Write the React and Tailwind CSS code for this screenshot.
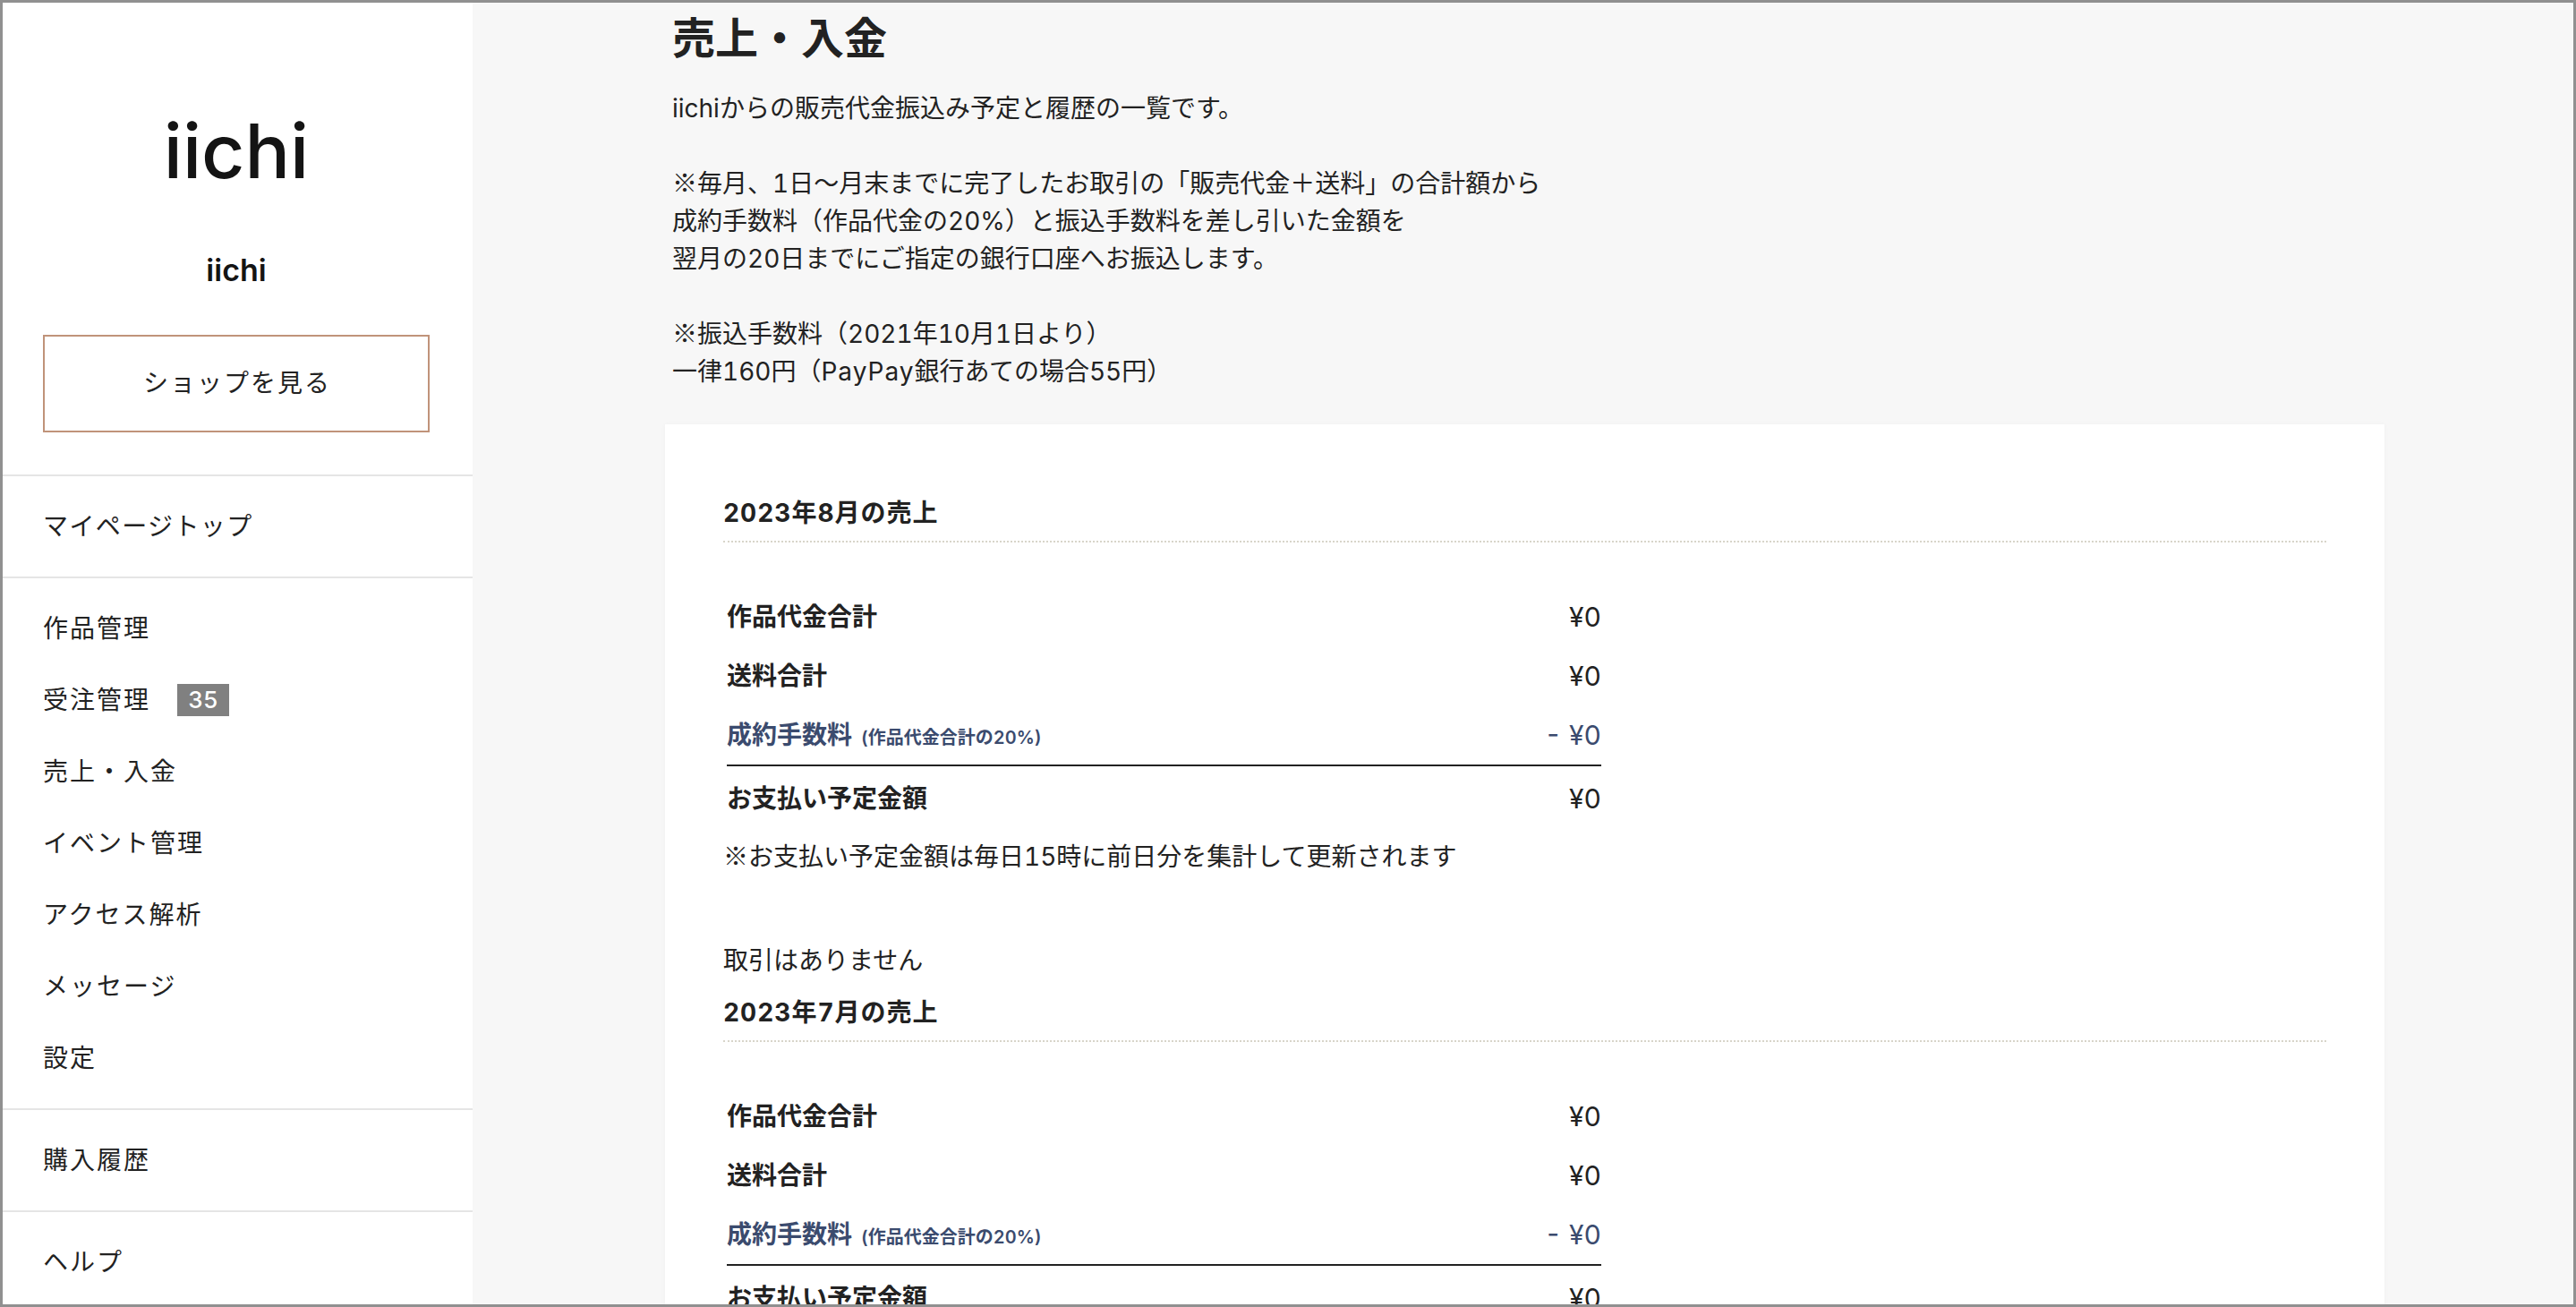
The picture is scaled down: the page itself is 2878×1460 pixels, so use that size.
const font = "font-['Inter','Noto_Sans_CJK_JP',sans-serif] tabular-nums";

function Mark() {
  return <span className="font-['Noto_Sans_CJK_JP',sans-serif] leading-none">※</span>;
}

function NavItem({ children, badge, tight }) {
  return (
    <li
      className={`h-[80px] pl-[45px] flex items-center text-[28px] text-[#222222] ${
        tight ? "tracking-[1.4px]" : "tracking-[2px]"
      }`}
    >
      <span>{children}</span>
      {badge && (
        <span className="ml-[30px] w-[58px] h-[36px] bg-[#808080] text-white text-[26px] tracking-normal leading-[36px] text-center font-medium">
          {badge}
        </span>
      )}
    </li>
  );
}

function Row({ label, note, value, blue, last }) {
  return (
    <div
      className={`flex items-center justify-between ${last ? "h-[72px]" : "h-[66px]"} ${
        blue ? "text-[#3b4b6e]" : "text-[#222222]"
      }`}
    >
      <span className="text-[28px] font-bold">
        {label}
        {note && <span className="ml-[10px] text-[20px] font-semibold">{note}</span>}
      </span>
      <span className="text-[30px]">{value}</span>
    </div>
  );
}

function Month({ title }) {
  return (
    <section>
      <h2 className="h-[42px] text-[28px] leading-[42px] tracking-[1px] font-bold text-[#222222]">{title}</h2>
      <div className="mt-[10px] border-b-2 border-dotted border-[#d8d5ca] w-[1791px]" />
      <div className="mt-[50px] ml-[4px] w-[977px]">
        <Row label="作品代金合計" value="¥0" />
        <Row label="送料合計" value="¥0" />
        <Row label="成約手数料" note="(作品代金合計の20%)" value="- ¥0" blue />
        <div className="border-t-2 border-[#222222]" />
        <Row label="お支払い予定金額" value="¥0" last />
      </div>
      <p className="mt-[8px] h-[42px] text-[28px] leading-[42px] text-[#222222]">
        <Mark />お支払い予定金額は毎日15時に前日分を集計して更新されます
      </p>
      <p className="mt-[74px] text-[28px] leading-[42px] text-[#222222]">取引はありません</p>
    </section>
  );
}

export default function App() {
  return (
    <div className={`w-[2878px] h-[1460px] border-[3px] border-[#909090] overflow-hidden flex ${font}`}>
      <aside className="w-[525px] shrink-0 bg-white flex flex-col">
        <div className="h-[529px] shrink-0 pr-[3px] flex flex-col items-center border-b-2 border-[#e5e5e5]">
          <div className="mt-[116px] h-[100px] leading-[100px] text-[84px] text-[#141414] font-medium">
            iichi
          </div>
          <div className="mt-[63px] h-[40px] leading-[40px] text-[34px] font-semibold text-[#141414]">
            iichi
          </div>
          <button className="mt-[52px] w-[432px] h-[109px] pb-[2px] pl-[2px] border-2 border-[#c0937a] text-[28px] tracking-[2px] text-[#222222] flex items-center justify-center">
            ショップを見る
          </button>
        </div>
        <ul className="h-[114px] shrink-0 py-[16px] border-b-2 border-[#e5e5e5]">
          <NavItem tight>マイページトップ</NavItem>
        </ul>
        <ul className="shrink-0 py-[16px] border-b-2 border-[#e5e5e5]">
          <NavItem>作品管理</NavItem>
          <NavItem badge="35">受注管理</NavItem>
          <NavItem>売上・入金</NavItem>
          <NavItem>イベント管理</NavItem>
          <NavItem>アクセス解析</NavItem>
          <NavItem>メッセージ</NavItem>
          <NavItem>設定</NavItem>
        </ul>
        <ul className="h-[114px] shrink-0 py-[16px] border-b-2 border-[#e5e5e5]">
          <NavItem>購入履歴</NavItem>
        </ul>
        <ul className="py-[16px]">
          <NavItem>ヘルプ</NavItem>
        </ul>
      </aside>
      <main className="flex-1 bg-[#f7f7f7] pl-[215px] pt-[10px]">
        <div className="pl-[8px]">
          <h1 className="h-[60px] text-[48px] leading-[60px] font-bold text-[#222222]">売上・入金</h1>
          <div className="mt-[27px] text-[28px] leading-[42px] text-[#222222]">
            <p>iichiからの販売代金振込み予定と履歴の一覧です。</p>
            <p className="mt-[42px] h-[42px]"><Mark />毎月、1日〜月末までに完了したお取引の「販売代金＋送料」の合計額から</p>
            <p className="h-[42px]">成約手数料（作品代金の20%）と振込手数料を差し引いた金額を</p>
            <p className="h-[42px]">翌月の20日までにご指定の銀行口座へお振込します。</p>
            <p className="mt-[42px] h-[42px]"><Mark />振込手数料（2021年10月1日より）</p>
            <p className="h-[42px]">一律160円（<span className="tracking-[1px]">PayPay</span>銀行あての場合55円）</p>
          </div>
        </div>
        <div className="mt-[38px] w-[1921px] bg-white pl-[65px] pt-[78px] shadow-[0_0_6px_rgba(0,0,0,0.03)]">
          <Month title="2023年8月の売上" />
          <div className="mt-[16px]">
            <Month title="2023年7月の売上" />
          </div>
        </div>
      </main>
    </div>
  );
}
